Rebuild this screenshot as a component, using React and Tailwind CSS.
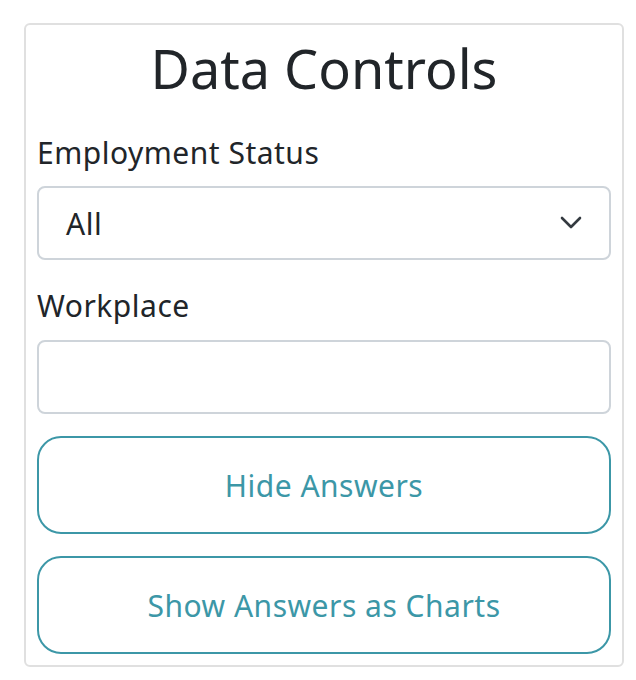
export default function App() {
  return (
    <div className="bg-white min-h-[680px] pt-[23px] pl-[24px] font-['Noto_Sans',sans-serif] text-[#212529]">
      <div className="w-[600px] h-[644px] border-2 border-[#e0e0e0] rounded-[6px] px-[11px] pt-[5px] flex flex-col">
        <h2 className="text-center text-[54px] leading-[76px] font-normal">Data Controls</h2>
        <label className="mt-[27px] text-[30px] leading-[40px] tracking-[0.5px]">Employment Status</label>
        <div className="mt-[13px] h-[74px] border-2 border-[#ced4da] rounded-[8px] flex items-center justify-between pl-[27px] pr-[26px] text-[30px] tracking-[0.5px]">
          <span>All</span>
          <svg width="24" height="14" viewBox="0 0 24 14" fill="none" stroke="#343a40" strokeWidth="2.6" strokeLinecap="round" strokeLinejoin="round">
            <path d="M3 2l9 9 9-9" />
          </svg>
        </div>
        <label className="mt-[26px] text-[30px] leading-[40px] tracking-[0.5px]">Workplace</label>
        <div className="mt-[14px] h-[74px] border-2 border-[#ced4da] rounded-[8px]" />
        <button className="mt-[22px] h-[98px] border-2 border-[#3c97a7] rounded-[24px] text-[#3c97a7] text-[30px] tracking-[0.5px]">
          Hide Answers
        </button>
        <button className="mt-[22px] h-[98px] border-2 border-[#3c97a7] rounded-[24px] text-[#3c97a7] text-[30px] tracking-[0.5px]">
          Show Answers as Charts
        </button>
      </div>
    </div>
  );
}
